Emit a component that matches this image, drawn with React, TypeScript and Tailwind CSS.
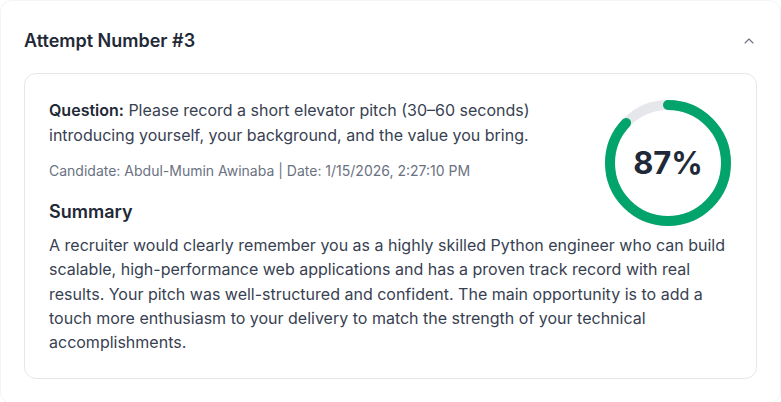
import React from "react";

function ScoreRing({ value }: { value: number }) {
  const r = 58;
  const c = 2 * Math.PI * r;
  return (
    <div className="relative w-32 h-32 shrink-0 mt-px">
      <svg width="128" height="128" viewBox="0 0 128 128" className="-rotate-90">
        <circle cx="64" cy="64" r={r} fill="none" stroke="#e5e7eb" strokeWidth="10" />
        <circle
          cx="64"
          cy="64"
          r={r}
          fill="none"
          stroke="#02a46c"
          strokeWidth="10"
          strokeLinecap="round"
          strokeDasharray={c}
          strokeDashoffset={c * (1 - value / 100)}
        />
      </svg>
      <div className="absolute inset-0 flex items-center justify-center text-[31px] font-bold text-[#1f2937]">
        {value}%
      </div>
    </div>
  );
}

export default function App() {
  return (
    <div className="w-[781px] h-[402px] bg-white overflow-hidden" style={{ fontFamily: "Inter, 'Noto Sans', sans-serif" }}>
      <div className="rounded-xl border border-gray-100 bg-white px-[23px] pt-[26px] pb-6">
        <div className="flex items-center justify-between">
          <h2 className="text-lg font-semibold text-[#1f2937]">Attempt Number #3</h2>
          <svg width="16" height="16" viewBox="0 0 24 24" fill="none" stroke="#6b7280" strokeWidth="1.6" strokeLinecap="round" strokeLinejoin="round">
            <path d="m18 15-6-6-6 6" />
          </svg>
        </div>
        <div className="mt-[18px] rounded-xl border border-gray-200 p-6">
          <div className="flex gap-6">
            <div className="flex-1 min-w-0">
              <p className="text-base leading-[25px] text-[#374151]">
                <span className="font-semibold text-[#1f2937]">Question:</span> Please record a short elevator pitch (30–60 seconds) introducing yourself, your background, and the value you bring.
              </p>
              <p className="mt-[13px] text-sm leading-5 text-gray-500">
                Candidate: Abdul-Mumin Awinaba | Date: 1/15/2026, 2:27:10 PM
              </p>
              <h3 className="mt-[17px] text-lg leading-7 font-semibold text-[#1f2937]">Summary</h3>
            </div>
            <ScoreRing value={87} />
          </div>
          <p className="mt-[6px] text-base leading-[24.3px] text-[#374151]">
            A recruiter would clearly remember you as a highly skilled Python engineer who can build scalable, high-performance web applications and has a proven track record with real results. Your pitch was well-structured and confident. The main opportunity is to add a touch more enthusiasm to your delivery to match the strength of your technical accomplishments.
          </p>
        </div>
      </div>
    </div>
  );
}
